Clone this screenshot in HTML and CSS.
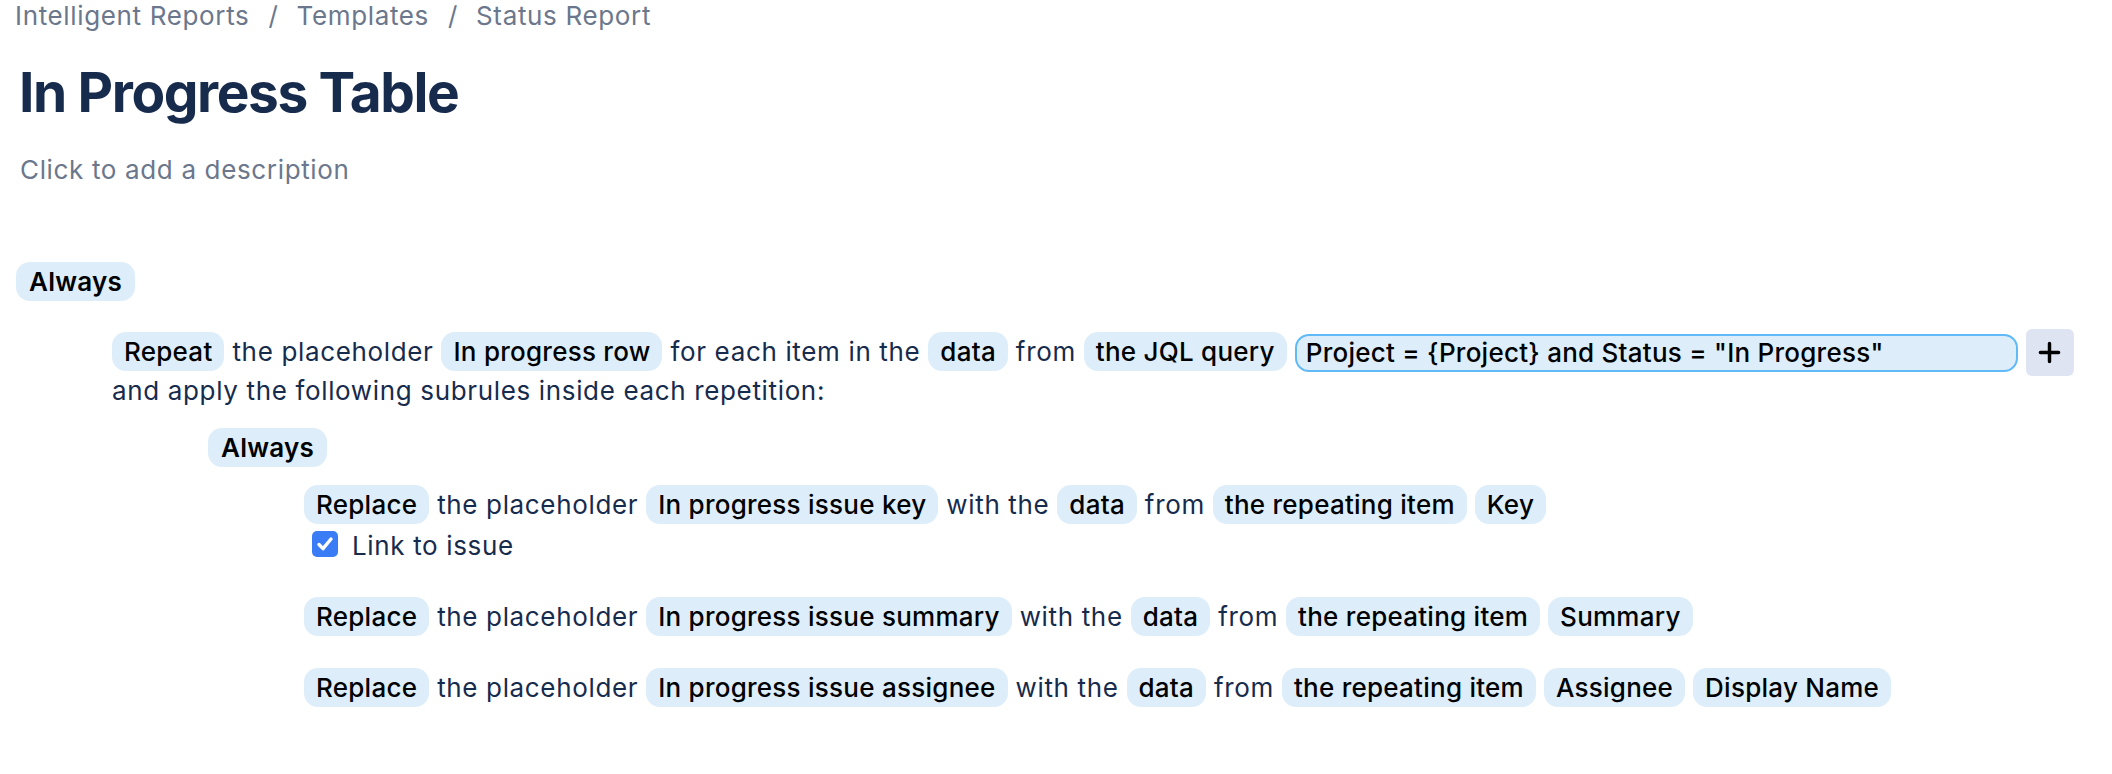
FILE: index.html
```html
<!DOCTYPE html>
<html lang="en">
<head>
<meta charset="utf-8">
<title>In Progress Table</title>
<link rel="stylesheet" href="styles.css">
</head>
<body>
<div class="page">
  <nav class="crumbs">
    <span class="crumb">Intelligent Reports</span><span class="sep">/</span><span class="crumb">Templates</span><span class="sep">/</span><span class="crumb">Status Report</span>
  </nav>
  <h1 class="title">In Progress Table</h1>
  <p class="desc">Click to add a description</p>

  <div class="rule">
    <div class="line"><span class="chip cond">Always</span></div>
    <div class="children outer">
      <div class="rule">
        <div class="line"><span class="chip">Repeat</span> the placeholder <span class="chip">In progress row</span> for each item in the <span class="chip">data</span> from <span class="chip">the JQL query</span> <span class="jql">Project = {Project} and Status = "In Progress"</span> <span class="add"><svg viewBox="0 0 24 24" width="23" height="23"><path d="M12 2.5v19M2.5 12h19" stroke="#000" stroke-width="3.6" stroke-linecap="round" fill="none"/></svg></span></div>
        <div class="line">and apply the following subrules inside each repetition:</div>
        <div class="children inner">
          <div class="rule">
            <div class="line"><span class="chip cond">Always</span></div>
            <div class="children inner">
              <div class="action">
                <div class="line"><span class="chip">Replace</span> the placeholder <span class="chip">In progress issue key</span> with the <span class="chip">data</span> from <span class="chip">the repeating item</span> <span class="chip">Key</span></div>
                <label class="check"><span class="box"><svg viewBox="0 0 26 26" width="26" height="26"><path d="M7 13.5l4 4.2L19 8" stroke="#fff" stroke-width="3.4" stroke-linecap="round" stroke-linejoin="round" fill="none"/></svg></span><span class="check-label">Link to issue</span></label>
              </div>
              <div class="action">
                <div class="line"><span class="chip">Replace</span> the placeholder <span class="chip">In progress issue summary</span> with the <span class="chip">data</span> from <span class="chip">the repeating item</span> <span class="chip">Summary</span></div>
              </div>
              <div class="action">
                <div class="line"><span class="chip">Replace</span> the placeholder <span class="chip">In progress issue assignee</span> with the <span class="chip">data</span> from <span class="chip">the repeating item</span> <span class="chip">Assignee</span> <span class="chip">Display Name</span></div>
              </div>
            </div>
          </div>
        </div>
      </div>
    </div>
  </div>
</div>
</body>
</html>
```

FILE: styles.css
```css
* { box-sizing: border-box; }

html, body {
  margin: 0;
  padding: 0;
  background: #ffffff;
}

body {
  font-family: Inter, "Noto Sans", "Liberation Sans", sans-serif;
  font-size: 26px;
  letter-spacing: 0.65px;
  color: #172b4d;
}

.page {
  padding: 0 16px;
}

.crumbs {
  margin-left: -1px;
  line-height: 32px;
  color: #6b778c;
  white-space: nowrap;
}

.sep {
  padding: 0 18px 0 19px;
}

.title {
  margin: 25px 0 0;
  padding-left: 3px;
  font-size: 55px;
  font-weight: 700;
  letter-spacing: -1.4px;
  line-height: 71px;
  color: #172b4d;
}

.desc {
  margin: 26px 0 0;
  padding-left: 4px;
  line-height: 32px;
  color: #6b778c;
}

.page > .rule {
  margin-top: 77px;
}

.line {
  line-height: 38px;
  white-space: nowrap;
}

.children {
  padding-left: 96px;
}

.children.outer {
  margin-top: 32px;
}

.children.inner {
  margin-top: 19px;
}

.chip {
  display: inline;
  padding: 4px 12px;
  border-radius: 14px;
  background: #ddeefa;
  color: #000000;
  font-weight: 500;
  letter-spacing: 0.25px;
}

.chip.cond {
  padding: 4px 13px;
  font-weight: 600;
}

.jql {
  display: inline-block;
  vertical-align: middle;
  width: 723px;
  height: 38px;
  margin: -2px 0 0;
  padding: 0 9px;
  border: 2px solid #5fbaf7;
  border-radius: 14px;
  background: #ddeefa;
  color: #000000;
  font-weight: 500;
  letter-spacing: 0.25px;
  line-height: 34px;
}

.add {
  display: inline-flex;
  align-items: center;
  justify-content: center;
  vertical-align: middle;
  width: 48px;
  height: 47px;
  margin: -6px 0 -4px;
  border-radius: 6px;
  background: #dfe4f3;
}

.add svg {
  display: block;
}

.action + .action {
  margin-top: 33px;
}

.check {
  display: flex;
  align-items: center;
  height: 38px;
  margin: 3px 0 5px 8px;
}

.box {
  display: block;
  width: 26px;
  height: 26px;
  margin-top: -4px;
  border-radius: 5px;
  background: #3a7cf5;
}

.box svg {
  display: block;
}

.check-label {
  margin-left: 14px;
  line-height: 38px;
  color: #172b4d;
}
```
